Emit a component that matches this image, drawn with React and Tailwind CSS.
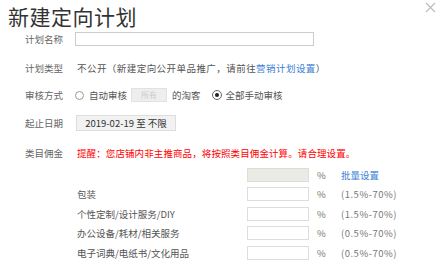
import React from "react";

const rows = [
    { name: "包装", range: "(1.5%-70%)" },
    { name: "个性定制/设计服务/DIY", range: "(1.5%-70%)" },
    { name: "办公设备/耗材/相关服务", range: "(0.5%-70%)" },
    { name: "电子词典/电纸书/文化用品", range: "(0.5%-70%)" },
];

const font = { fontFamily: "'Noto Sans CJK SC', 'Liberation Sans', sans-serif" };

const App = () => {
    return (
        <div className="relative w-[447px] h-[278px] bg-white overflow-hidden text-[9.5px] text-[#333]" style={font}>
            {/* close */}
            <svg className="absolute left-[425px] top-[2px] w-[11px] h-[11px]" viewBox="0 0 11 11">
                <path d="M1 1 L10 10 M10 1 L1 10" stroke="#bbb" strokeWidth="1.1" />
            </svg>

            {/* title */}
            <div className="pl-[8px] pt-[3px] h-[29px] text-[21px] leading-[26px] text-[#333] tracking-[0.5px]">新建定向计划</div>

            <div className="pl-[25px]">
                {/* plan name */}
                <div className="flex items-center h-[20px]">
                    <div className="w-[50px] text-[#666]">计划名称</div>
                    <div className="w-[239px] h-[14px] border border-[#ccc] bg-white"></div>
                </div>

                {/* plan type */}
                <div className="flex items-center h-[20px] mt-[9px]">
                    <div className="w-[52px] text-[#666]">计划类型</div>
                    <div className="text-[#555] tracking-[0.45px]">
                        不公开（新建定向公开单品推广，请前往<span className="text-[#3a7fd5]">营销计划设置</span>）
                    </div>
                </div>

                {/* audit */}
                <div className="flex items-center h-[20px] mt-[7px]">
                    <div className="w-[50px] text-[#666]">审核方式</div>
                    <span className="w-[9px] h-[9px] rounded-full border border-[#999] mr-[5px]"></span>
                    <span className="text-[#555]">自动审核</span>
                    <div className="ml-[4px] w-[36px] h-[14px] bg-[#eee] border border-[#e2e2e2] text-[#ccc] flex items-center justify-center text-[8px]">所有</div>
                    <span className="ml-[5px] text-[#555]">的淘客</span>
                    <span className="ml-[11px] w-[10px] h-[10px] rounded-full border border-[#666] flex items-center justify-center mr-[4px]">
                        <span className="w-[4px] h-[4px] rounded-full bg-[#222]"></span>
                    </span>
                    <span className="text-[#555]">全部手动审核</span>
                </div>

                {/* dates */}
                <div className="flex items-center h-[20px] mt-[8px]">
                    <div className="w-[51px] text-[#666]">起止日期</div>
                    <div className="w-[100px] h-[16px] bg-[#f2f2f2] border border-[#ddd] flex items-center justify-center text-[#333] text-[9.5px]">2019-02-19 至 不限</div>
                </div>

                {/* commission */}
                <div className="flex items-center h-[20px] mt-[10px]">
                    <div className="w-[52px] text-[#666]">类目佣金</div>
                    <div className="text-[#f00] tracking-[0.1px]">提醒：您店铺内非主推商品，将按照类目佣金计算。请合理设置。</div>
                </div>

                <div className="flex items-center h-[19.5px] mt-[2px]">
                    <div className="w-[222px]"></div>
                    <div className="w-[62px] h-[14px] bg-[#ebebe6] border border-[#ddd]"></div>
                    <span className="ml-[8px] w-[24px] text-[#777]">%</span>
                    <span className="text-[#3a7fd5]">批量设置</span>
                </div>

                {rows.map((r, i) => (
                    <div key={i} className="flex items-center h-[19.5px]">
                        <div className="w-[52px]"></div>
                        <div className="w-[170px] text-[#555]">{r.name}</div>
                        <div className="w-[62px] h-[14px] bg-white border border-[#ddd]"></div>
                        <span className="ml-[8px] w-[24px] text-[#777]">%</span>
                        <span className="text-[#777] tracking-[0.5px]">{r.range}</span>
                    </div>
                ))}
            </div>
        </div>
    );
};

export default App;
